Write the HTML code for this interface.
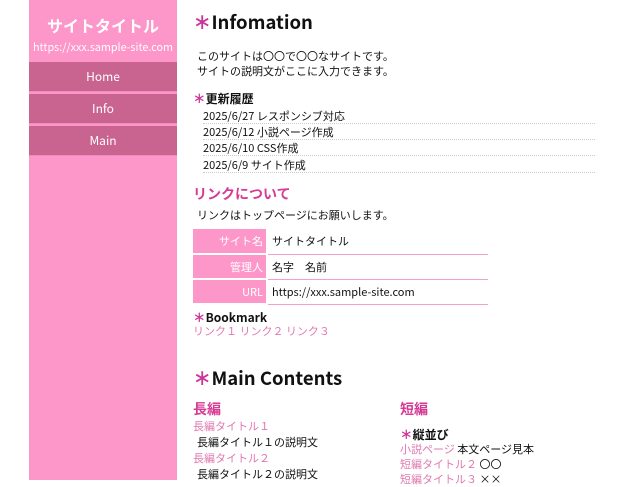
<!DOCTYPE html>
<html><head><meta charset="utf-8"><style>
*{margin:0;padding:0;box-sizing:border-box}
body{width:640px;height:480px;overflow:hidden;background:#fff;font-family:"Noto Sans CJK JP","Liberation Sans",sans-serif;color:#111;position:relative}
.a{position:absolute;white-space:nowrap;line-height:1.2}
#side{position:absolute;left:29px;top:0;width:148px;height:480px;background:#fd96c9}
.nav{position:absolute;left:0;width:148px;height:30px;background:#c9638f;color:#fff;font-size:12px;text-align:center;line-height:30px;border-bottom:1px solid #f08cbd}
.st{color:#cc3399;font-weight:normal}
.h1{font-size:18.5px;font-weight:bold}
.pk{color:#d63a94;font-weight:bold;font-size:14px}
.ln{color:#e07ab0;font-size:11px}
.t{font-size:11px}
.row{position:absolute;left:203px;width:392px;height:16px;border-bottom:1px dotted #ccc;font-size:11px;line-height:16px}
table{position:absolute;left:193px;top:229px;width:295px;border-collapse:collapse;font-size:11px}
th{background:#fd96c9;color:#fff;font-weight:normal;text-align:right;width:74px;padding-right:3px;height:25px;border-bottom:2px solid #fff;border-right:2px solid #fff}
td{padding-left:4px;border-bottom:1px solid #f5a0cc}
</style></head><body>
<div id="side">
<div class="a" style="left:0;width:148px;text-align:center;top:16px;color:#fff;font-size:16px;font-weight:bold">サイトタイトル</div>
<div class="a" style="left:0;width:148px;text-align:center;top:41px;color:#fff;font-size:10.8px">https://xxx.sample-site.com</div>
<div class="nav" style="top:62px">Home</div>
<div class="nav" style="top:94px">Info</div>
<div class="nav" style="top:126px">Main</div>
</div>
<div class="a h1" style="left:193px;top:7px"><span class="st" style="font-size:22px">∗</span>Infomation</div>
<div class="a t" style="left:197px;top:50px">このサイトは〇〇で〇〇なサイトです。</div>
<div class="a t" style="left:197px;top:65px">サイトの説明文がここに入力できます。</div>
<div class="a" style="left:193px;top:89px;font-size:12px;font-weight:bold"><span class="st" style="font-size:15px">∗</span>更新履歴</div>
<div class="row" style="top:108px">2025/6/27 レスポンシブ対応</div>
<div class="row" style="top:124px">2025/6/12 小説ページ作成</div>
<div class="row" style="top:140px">2025/6/10 CSS作成</div>
<div class="row" style="top:157px">2025/6/9 サイト作成</div>
<div class="a pk" style="left:193px;top:186px">リンクについて</div>
<div class="a t" style="left:197px;top:209px">リンクはトップページにお願いします。</div>
<table>
<tr><th>サイト名</th><td>サイトタイトル</td></tr>
<tr><th>管理人</th><td>名字　名前</td></tr>
<tr><th>URL</th><td>https://xxx.sample-site.com</td></tr>
</table>
<div class="a" style="left:193px;top:308px;font-size:12px;font-weight:bold"><span class="st" style="font-size:15px">∗</span>Bookmark</div>
<div class="a ln" style="left:193px;top:325px">リンク１ リンク２ リンク３</div>
<div class="a h1" style="left:193px;top:363px"><span class="st" style="font-size:22px">∗</span>Main Contents</div>
<div class="a pk" style="left:193px;top:401px">長編</div>
<div class="a ln" style="left:193px;top:420px">長編タイトル１</div>
<div class="a t" style="left:197px;top:436px">長編タイトル１の説明文</div>
<div class="a ln" style="left:193px;top:452px">長編タイトル２</div>
<div class="a t" style="left:197px;top:468px">長編タイトル２の説明文</div>
<div class="a pk" style="left:400px;top:401px">短編</div>
<div class="a" style="left:400px;top:425px;font-size:12px;font-weight:bold"><span class="st" style="font-size:15px">∗</span>縦並び</div>
<div class="a t" style="left:400px;top:443px"><span class="ln">小説ページ</span> 本文ページ見本</div>
<div class="a t" style="left:400px;top:458px"><span class="ln">短編タイトル２</span> 〇〇</div>
<div class="a t" style="left:400px;top:473px"><span class="ln">短編タイトル３</span> ××</div>
</body></html>
